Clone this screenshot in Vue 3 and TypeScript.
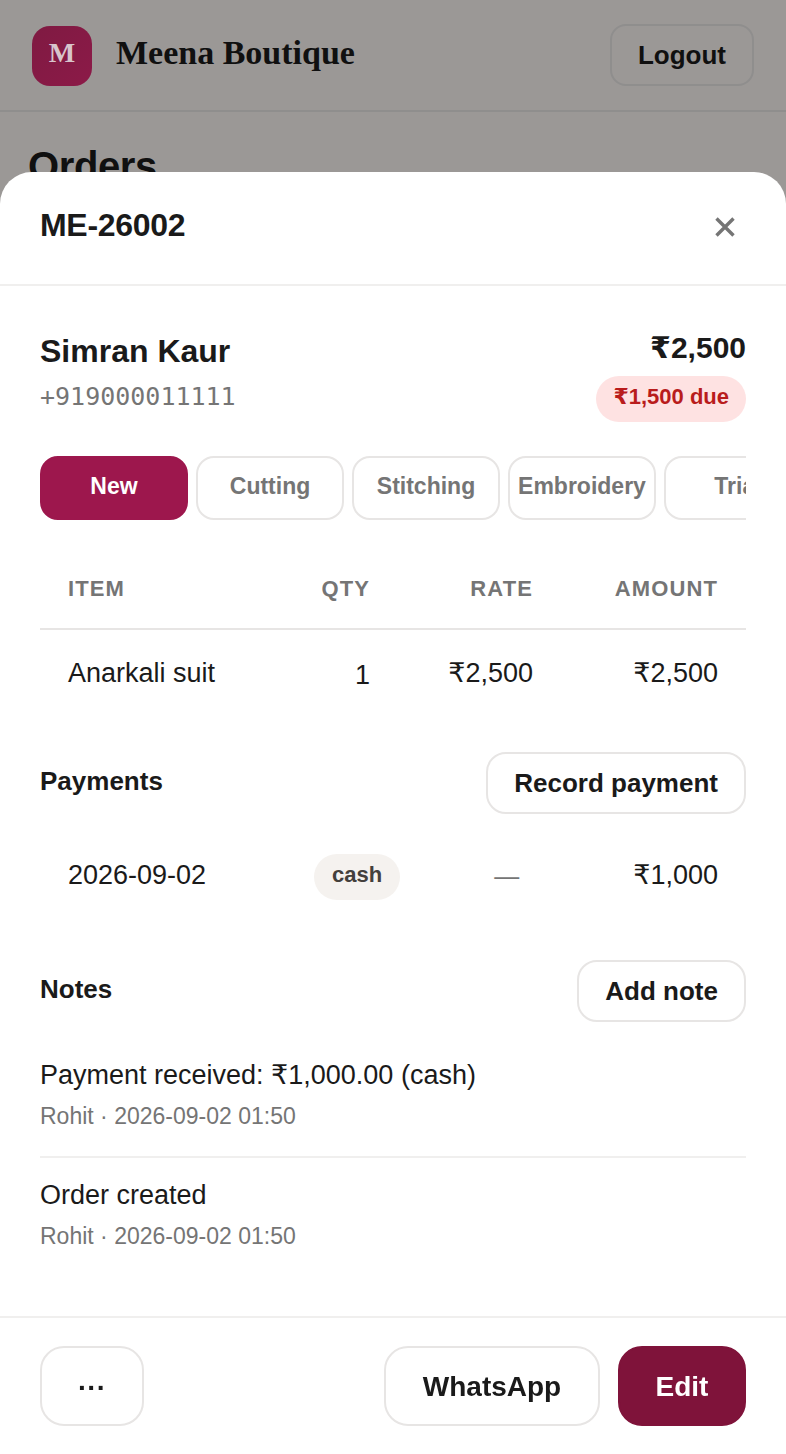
<template>
  <div class="page">
    <header class="topbar">
      <div class="brand">
        <div class="logo">M</div>
        <span class="brand-name">Meena Boutique</span>
      </div>
      <button class="logout">Logout</button>
    </header>
    <h1 class="page-title">Orders</h1>
  </div>

  <div class="overlay"></div>

  <section class="sheet">
    <div class="sheet-head">
      <h2 class="order-no">{{ order.number }}</h2>
      <svg class="close" viewBox="0 0 20 20" width="20" height="20" aria-label="Close">
        <path d="M1.5 1.5 18.5 18.5M18.5 1.5 1.5 18.5" />
      </svg>
    </div>

    <div class="sheet-body">
      <div class="customer">
        <div>
          <div class="cust-name">{{ order.customer }}</div>
          <div class="cust-phone">{{ order.phone }}</div>
        </div>
        <div class="totals">
          <div class="total">{{ order.total }}</div>
          <span class="due">{{ order.due }}</span>
        </div>
      </div>

      <div class="stages">
        <button
          v-for="(stage, i) in stages"
          :key="stage"
          class="stage"
          :class="{ active: i === 0 }"
        >{{ stage }}</button>
      </div>

      <div class="items">
        <div class="row head">
          <span>Item</span>
          <span class="num">Qty</span>
          <span class="num">Rate</span>
          <span class="num">Amount</span>
        </div>
        <div v-for="item in items" :key="item.name" class="row">
          <span>{{ item.name }}</span>
          <span class="num qty">{{ item.qty }}</span>
          <span class="num">{{ item.rate }}</span>
          <span class="num">{{ item.amount }}</span>
        </div>
      </div>

      <div class="section-head pay-head">
        <h3>Payments</h3>
        <button class="small-btn">Record payment</button>
      </div>
      <div class="pay-row">
        <span class="lift">2026-09-02</span>
        <span class="method">cash</span>
        <span class="dash">—</span>
        <span class="num lift">₹1,000</span>
      </div>

      <div class="section-head notes-head">
        <h3>Notes</h3>
        <button class="small-btn">Add note</button>
      </div>
      <div class="notes">
        <div v-for="note in notes" :key="note" class="note">
          <div class="note-text">{{ note }}</div>
          <div class="note-meta">Rohit · 2026-09-02 01:50</div>
        </div>
      </div>
    </div>

    <div class="sheet-foot">
      <button class="foot-btn more">···</button>
      <div class="foot-right">
        <button class="foot-btn whatsapp">WhatsApp</button>
        <button class="foot-btn edit">Edit</button>
      </div>
    </div>
  </section>
</template>

<script setup lang="ts">
const order = {
  number: 'ME-26002',
  customer: 'Simran Kaur',
  phone: '+919000011111',
  total: '₹2,500',
  due: '₹1,500 due'
}

const stages = ['New', 'Cutting', 'Stitching', 'Embroidery', 'Trial']

const items = [{ name: 'Anarkali suit', qty: 1, rate: '₹2,500', amount: '₹2,500' }]

const notes = ['Payment received: ₹1,000.00 (cash)', 'Order created']
</script>

<style>
html,
body {
  margin: 0;
  background: #faf5f2;
}
</style>

<style scoped>
.page {
  height: 1454px;
  overflow: hidden;
  background: #faf5f2;
  color: #1a1a1a;
  font-family: "Liberation Sans", "DejaVu Sans", sans-serif;
}

.topbar {
  display: flex;
  align-items: center;
  justify-content: space-between;
  height: 110px;
  padding: 0 32px;
  border-bottom: 2px solid #e7e5e4;
}

.brand {
  display: flex;
  align-items: center;
  gap: 24px;
}

/* sits above the scrim, the mark stays brighter than the rest of the page */
.logo {
  position: relative;
  z-index: 1;
  width: 60px;
  height: 60px;
  margin-top: 2px;
  border-radius: 18px;
  background: linear-gradient(135deg, #7f1a42, #8c1a48);
  color: #d8c4cc;
  font-family: "Liberation Serif", serif;
  font-weight: 700;
  font-size: 28px;
  line-height: 54px;
  text-align: center;
}

.brand-name {
  font-family: "Liberation Serif", serif;
  font-weight: 700;
  font-size: 34px;
  margin-top: -4px;
}

.logout {
  width: 144px;
  height: 62px;
  border: 2px solid #e7e5e4;
  border-radius: 16px;
  background: transparent;
  color: #1a1a1a;
  font-family: inherit;
  font-size: 26px;
  font-weight: 700;
}

.page-title {
  margin: 30px 0 0 28px;
  font-size: 40px;
  line-height: 48px;
  font-weight: 700;
  letter-spacing: -0.4px;
}

.overlay {
  position: fixed;
  inset: 0;
  background: rgba(0, 0, 0, 0.38);
}

.sheet {
  position: fixed;
  z-index: 2;
  left: 0;
  right: 0;
  bottom: 0;
  top: 172px;
  display: flex;
  flex-direction: column;
  background: #fff;
  border-radius: 32px 32px 0 0;
  color: #1a1a1a;
  font-family: "Liberation Sans", "DejaVu Sans", sans-serif;
}

.sheet-head {
  display: flex;
  align-items: center;
  justify-content: space-between;
  height: 112px;
  padding: 0 51px 0 40px;
  border-bottom: 2px solid #f0efee;
}

.order-no {
  margin: 0 0 6px;
  font-size: 32px;
  font-weight: 700;
  letter-spacing: -0.3px;
}

.close {
  fill: none;
  stroke: #757575;
  stroke-width: 3.4;
  margin-bottom: 2px;
}

.sheet-body {
  flex: 1;
  min-height: 0;
  padding: 44px 40px 0;
  overflow: hidden;
}

.customer {
  display: flex;
  justify-content: space-between;
  align-items: flex-start;
}

.cust-name {
  margin-top: 1px;
  font-size: 32px;
  line-height: 40px;
  font-weight: 700;
}

.cust-phone {
  margin-top: 9px;
  font-family: "DejaVu Sans Mono", monospace;
  font-size: 25px;
  line-height: 34px;
  color: #757575;
}

.totals {
  display: flex;
  flex-direction: column;
  align-items: flex-end;
}

.total {
  font-size: 30px;
  line-height: 36px;
  font-weight: 700;
}

.due {
  margin-top: 10px;
  padding: 0 17px;
  height: 46px;
  line-height: 42px;
  border-radius: 23px;
  background: #fee2e2;
  color: #b91c1c;
  font-size: 22px;
  font-weight: 700;
}

.stages {
  display: flex;
  gap: 8px;
  margin-top: 34px;
  overflow: hidden;
}

.stage {
  flex: 0 0 148px;
  height: 64px;
  padding: 0 8px 4px;
  border: 2px solid #e7e5e4;
  border-radius: 18px;
  background: #fff;
  color: #757575;
  font-family: inherit;
  font-size: 23px;
  font-weight: 700;
  white-space: nowrap;
}

.stage.active {
  background: #9d174d;
  border-color: #9d174d;
  color: #fff;
}

.items {
  margin-top: 36px;
}

.row {
  display: grid;
  grid-template-columns: 1fr 100px 163px 185px;
  padding: 0 28px;
  font-size: 27px;
}

.row.head {
  box-sizing: border-box;
  height: 74px;
  padding-bottom: 6px;
  align-items: center;
  border-bottom: 2px solid #e7e5e4;
  color: #757575;
  font-size: 22px;
  font-weight: 700;
  letter-spacing: 1.1px;
  text-transform: uppercase;
}

.row:not(.head) {
  box-sizing: border-box;
  height: 88px;
  padding-bottom: 2px;
  align-items: center;
}

.num {
  text-align: right;
}

.qty {
  padding-top: 4px;
}

.section-head {
  display: flex;
  justify-content: space-between;
  align-items: flex-start;
}

.section-head h3 {
  margin: 14px 0 0;
  font-size: 26px;
  line-height: 30px;
  font-weight: 700;
}

.pay-head {
  margin-top: 34px;
}

.notes-head {
  margin-top: 60px;
}

.small-btn {
  height: 62px;
  padding: 0 26px;
  border: 2px solid #e7e5e4;
  border-radius: 20px;
  background: #fff;
  color: #1a1a1a;
  font-family: inherit;
  font-size: 26px;
  font-weight: 700;
}

.pay-row {
  display: grid;
  grid-template-columns: 246px auto 1fr auto;
  align-items: center;
  margin-top: 40px;
  padding: 0 28px;
  font-size: 27px;
}

.lift {
  margin-bottom: 4px;
}

.method {
  justify-self: start;
  padding: 0 18px;
  height: 46px;
  line-height: 42px;
  border-radius: 23px;
  background: #f5f2ef;
  color: #44403c;
  font-size: 22px;
  font-weight: 700;
}

.dash {
  margin: 0 0 2px 94px;
  font-size: 25px;
  color: #757575;
}

.notes {
  margin-top: 22px;
}

.note {
  padding: 14px 0 23px;
}

.note + .note {
  padding-top: 20px;
  border-top: 2px solid #f0efee;
}

.note-text {
  font-size: 27px;
  line-height: 34px;
}

.note-meta {
  margin-top: 7px;
  font-size: 23px;
  line-height: 34px;
  color: #757575;
}

.sheet-foot {
  display: flex;
  justify-content: space-between;
  height: 138px;
  padding: 28px 40px 0;
  box-sizing: border-box;
  border-top: 2px solid #f0efee;
}

.foot-right {
  display: flex;
  gap: 18px;
}

.foot-btn {
  height: 80px;
  padding: 2px 0 0;
  border: 2px solid #e7e5e4;
  border-radius: 24px;
  background: #fff;
  color: #1a1a1a;
  font-family: inherit;
  font-size: 28px;
  font-weight: 700;
}

.more {
  width: 104px;
  padding-top: 4px;
}

.whatsapp {
  width: 216px;
}

.edit {
  width: 128px;
  background: #7f133a;
  border-color: #7f133a;
  color: #fff;
}
</style>
